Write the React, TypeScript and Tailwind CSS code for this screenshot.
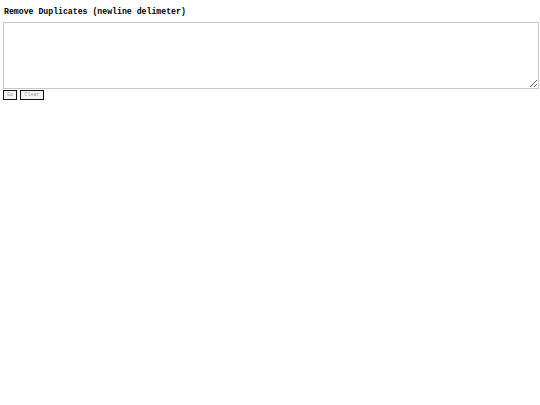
export default function App() {
  return (
    <div className="min-h-[405px] w-[540px] bg-white pl-[3px] pr-[1px] pt-[7px]" style={{ fontFamily: '"Liberation Mono", "Courier New", monospace' }}>
      <div className="pl-[1px] text-[8.2px] font-bold leading-[10px] text-black">Remove Duplicates (newline delimeter)</div>
      <div className="mt-[5px]">
        <textarea className="block h-[67px] w-[536px] border border-[#c8c8c8] bg-white p-0 outline-none" />
      </div>
      <div className="mt-[1px] flex gap-[3px]">
        <button className="flex h-[10px] w-[14px] items-center justify-center border-[1.5px] border-[#111] bg-[#f3f3f3] text-[5px] leading-none text-[#999]">Go</button>
        <button className="flex h-[10px] w-[24px] items-center justify-center border-[1.5px] border-[#111] bg-[#f3f3f3] text-[5px] leading-none text-[#999]">Clear</button>
      </div>
    </div>
  );
}
